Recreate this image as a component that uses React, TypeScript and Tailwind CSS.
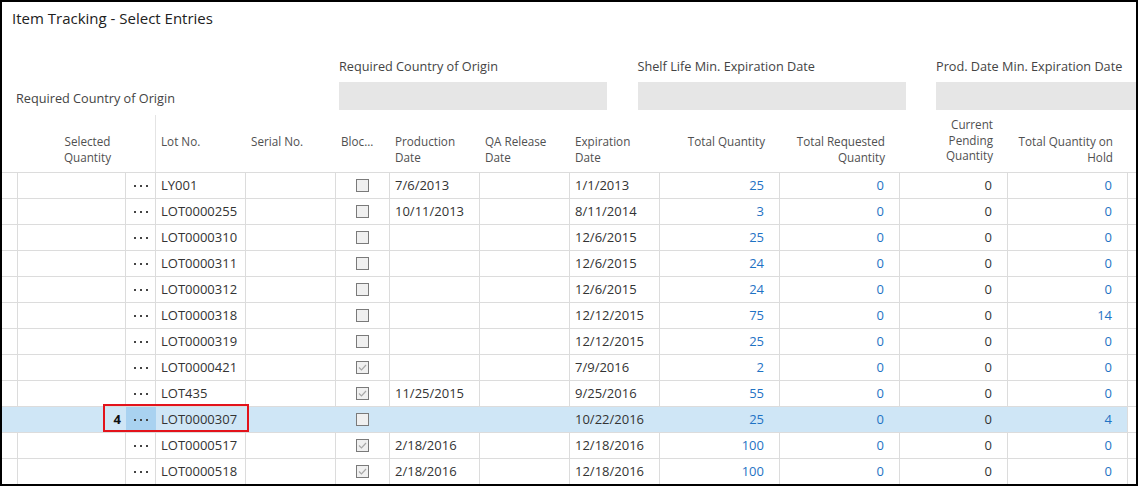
import React from "react";

type Row = {
  lot: string;
  blocked: boolean;
  prod: string;
  exp: string;
  tq: string;
  treq: string;
  pend: string;
  hold: string;
  sel?: string;
};

const rows: Row[] = [
  { lot: "LY001", blocked: false, prod: "7/6/2013", exp: "1/1/2013", tq: "25", treq: "0", pend: "0", hold: "0" },
  { lot: "LOT0000255", blocked: false, prod: "10/11/2013", exp: "8/11/2014", tq: "3", treq: "0", pend: "0", hold: "0" },
  { lot: "LOT0000310", blocked: false, prod: "", exp: "12/6/2015", tq: "25", treq: "0", pend: "0", hold: "0" },
  { lot: "LOT0000311", blocked: false, prod: "", exp: "12/6/2015", tq: "24", treq: "0", pend: "0", hold: "0" },
  { lot: "LOT0000312", blocked: false, prod: "", exp: "12/6/2015", tq: "24", treq: "0", pend: "0", hold: "0" },
  { lot: "LOT0000318", blocked: false, prod: "", exp: "12/12/2015", tq: "75", treq: "0", pend: "0", hold: "14" },
  { lot: "LOT0000319", blocked: false, prod: "", exp: "12/12/2015", tq: "25", treq: "0", pend: "0", hold: "0" },
  { lot: "LOT0000421", blocked: true, prod: "", exp: "7/9/2016", tq: "2", treq: "0", pend: "0", hold: "0" },
  { lot: "LOT435", blocked: true, prod: "11/25/2015", exp: "9/25/2016", tq: "55", treq: "0", pend: "0", hold: "0" },
  { lot: "LOT0000307", blocked: false, prod: "", exp: "10/22/2016", tq: "25", treq: "0", pend: "0", hold: "4", sel: "4" },
  { lot: "LOT0000517", blocked: true, prod: "2/18/2016", exp: "12/18/2016", tq: "100", treq: "0", pend: "0", hold: "0" },
  { lot: "LOT0000518", blocked: true, prod: "2/18/2016", exp: "12/18/2016", tq: "100", treq: "0", pend: "0", hold: "0" },
];

function Checkbox({ checked }: { checked: boolean }) {
  return (
    <div className="w-[13px] h-[13px] border border-[#7a7a7a] bg-[#f0f0f0] flex items-center justify-center">
      {checked && (
        <svg width="11" height="11" viewBox="0 0 11 11">
          <path d="M2 5.5 L4.5 8 L9 3" fill="none" stroke="#a8a8a8" strokeWidth="1.2" />
        </svg>
      )}
    </div>
  );
}

function Dots() {
  return (
    <div className="flex gap-[4px] items-center">
      <div className="w-[2px] h-[2px] bg-[#444]" />
      <div className="w-[2px] h-[2px] bg-[#444]" />
      <div className="w-[2px] h-[2px] bg-[#444]" />
    </div>
  );
}

export default function App() {
  const font = { fontFamily: '"Open Sans", "Noto Sans", sans-serif' };
  return (
    <div
      className="w-[1138px] h-[486px] border-t-2 border-l-2 border-r-2 border-b-2 border-black bg-white overflow-hidden text-[#333]"
      style={font}
    >
      {/* Title */}
      <div className="h-[46px] pl-[10px] pt-[6px] text-[15px] leading-[20px] text-[#212121]">
        Item Tracking - Select Entries
      </div>

      {/* Filters */}
      <div className="flex h-[67px] text-[12.7px] whitespace-nowrap">
        <div className="w-[337px] shrink-0 pl-[14px] pt-[37px]">
          <div className="h-[28px] flex items-center text-[#444]">Required Country of Origin</div>
        </div>
        <div className="flex gap-[30.5px] shrink-0">
          {["Required Country of Origin", "Shelf Life Min. Expiration Date", "Prod. Date Min. Expiration Date"].map((l) => (
            <div key={l} className="w-[268px] shrink-0 pt-[9px]">
              <div className="h-[18px] leading-[18px] text-[#444]">{l}</div>
              <div className="mt-[7px] h-[28px] bg-[#e6e6e6]" />
            </div>
          ))}
        </div>
      </div>

      {/* Column headers */}
      <div className="flex h-[58px] border-b border-[#dcdcdc] text-[11.7px] leading-[16px] text-[#505050]">
        <div className="w-[16px] shrink-0" />
        <div className="w-[108px] shrink-0 flex items-end pb-[7px] justify-end pr-[15px] text-center">
          <div className="min-h-[32px]">Selected<br />Quantity</div>
        </div>
        <div className="w-[30px] shrink-0 border-r border-[#e4e4e4]" />
        <HeadL w="w-[90px]">Lot No.</HeadL>
        <HeadL w="w-[90px]">Serial No.</HeadL>
        <HeadL w="w-[54px]">Bloc...</HeadL>
        <HeadL w="w-[90px]">Production<br />Date</HeadL>
        <HeadL w="w-[90px]">QA Release<br />Date</HeadL>
        <HeadL w="w-[90px]">Expiration<br />Date</HeadL>
        <HeadR w="w-[120px]">Total Quantity</HeadR>
        <HeadR w="w-[120px]">Total Requested<br />Quantity</HeadR>
        <HeadR w="w-[108px]" three>Current<br />Pending<br />Quantity</HeadR>
        <HeadR w="w-[120px]">Total Quantity on<br />Hold</HeadR>
        <div className="w-[8px] shrink-0" />
      </div>

      {/* Rows */}
      <div className="text-[13px]">
        {rows.map((r, i) => {
          const s = !!r.sel;
          const bc = s ? "border-r-transparent" : "border-r-[#dcdcdc]";
          return (
            <div
              key={i}
              className={`relative flex h-[26px] border-b border-[#dcdcdc] ${s ? "bg-[#cfe6f6]" : "bg-white"}`}
            >
              <div className={`w-[16px] shrink-0 border-r ${bc}`} />
              <div className={`w-[108px] shrink-0 border-r ${bc} flex items-center justify-end pr-[4px] font-bold text-[#111]`}>
                {r.sel ?? ""}
              </div>
              <div className={`w-[30px] shrink-0 border-r ${bc} flex items-center justify-center ${s ? "bg-[#a9d2f0]" : ""}`}>
                <Dots />
              </div>
              <CellL w="w-[90px]" bc={bc}>{r.lot}</CellL>
              <CellL w="w-[90px]" bc={bc}>{""}</CellL>
              <div className={`w-[54px] shrink-0 border-r ${bc} flex items-center justify-center`}>
                <Checkbox checked={r.blocked} />
              </div>
              <CellL w="w-[90px]" bc={bc}>{r.prod}</CellL>
              <CellL w="w-[90px]" bc={bc}>{""}</CellL>
              <CellL w="w-[90px]" bc={bc}>{r.exp}</CellL>
              <CellR w="w-[120px]" bc={bc} blue>{r.tq}</CellR>
              <CellR w="w-[120px]" bc={bc} blue>{r.treq}</CellR>
              <CellR w="w-[108px]" bc={bc}>{r.pend}</CellR>
              <CellR w="w-[120px]" bc="border-r-[#dcdcdc]" blue>{r.hold}</CellR>
              <div className="w-[8px] shrink-0 bg-white" />
              {s && (
                <div className="absolute left-[101px] top-[-3px] w-[146px] h-[28px] border-2 border-[#e3131b] pointer-events-none" />
              )}
            </div>
          );
        })}
      </div>
    </div>
  );
}

function HeadL({ w, children }: { w: string; children: React.ReactNode }) {
  return (
    <div className={`${w} shrink-0 flex items-end pb-[7px] pl-[5px]`}>
      <div className="min-h-[32px]">{children}</div>
    </div>
  );
}

function HeadR({ w, children, three }: { w: string; children: React.ReactNode; three?: boolean }) {
  return (
    <div className={`${w} shrink-0 flex items-end justify-end pb-[7px] pr-[15px] text-right`}>
      <div className={three ? "min-h-[48px] leading-[15.5px]" : "min-h-[32px]"}>{children}</div>
    </div>
  );
}

function CellL({ w, bc, children }: { w: string; bc: string; children: React.ReactNode }) {
  return (
    <div className={`${w} shrink-0 border-r ${bc} flex items-center pl-[5px] whitespace-nowrap overflow-hidden`}>
      {children}
    </div>
  );
}

function CellR({ w, bc, blue, children }: { w: string; bc: string; blue?: boolean; children: React.ReactNode }) {
  return (
    <div
      className={`${w} shrink-0 border-r ${bc} flex items-center justify-end pr-[15px] ${blue ? "text-[#1f73c4]" : "text-[#333]"}`}
    >
      {children}
    </div>
  );
}
